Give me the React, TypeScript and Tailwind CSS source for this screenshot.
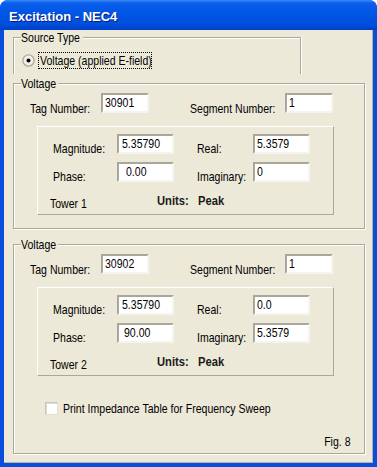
const txt = "font-['Liberation_Sans',Arial,sans-serif] text-[13px] leading-[15px] text-black"

// the dialog font is a tall, narrow sans: squeeze Liberation Sans horizontally
function T({ children, className = "", right = false }: { children: React.ReactNode; className?: string; right?: boolean }) {
  return (
    <span className={`${txt} block whitespace-nowrap scale-x-[0.81] ${right ? "origin-right" : "origin-left"} ${className}`}>
      {children}
    </span>
  )
}

const etched = "border border-[#aca899] shadow-[inset_1px_1px_0_#fff,1px_1px_0_#fff]"
const boldCls = "block whitespace-nowrap origin-left scale-x-[0.86] font-['Liberation_Sans',Arial,sans-serif] text-[13px] font-bold leading-[15px] text-[#1a1a1a]"

function Field({ value, w, pad = "pl-[2px]" }: { value: string; w: string; pad?: string }) {
  return (
    <div className={`${w} ${pad} h-[20px] shrink-0 overflow-hidden border-2 border-t-[#a9a69a] border-l-[#a9a69a] border-b-[#f5f4ee] border-r-[#f5f4ee] bg-white`}>
      <T>{value}</T>
    </div>
  )
}

function GroupLabel({ children, w }: { children: string; w: string }) {
  return (
    <span className={`absolute -top-[8px] left-[7px] ${w} h-[15px] bg-[#ece9d8]`}>
      <T>{children}</T>
    </span>
  )
}

interface VoltageProps {
  tag: string
  mag: string
  real: string
  phase: string
  imag: string
  phasePad: string
  tower: string
  height: string
  children?: React.ReactNode
}

function VoltageGroup({ tag, mag, real, phase, imag, phasePad, tower, height, children }: VoltageProps) {
  return (
    <div className={`relative w-[352px] ${height} ${etched}`}>
      <GroupLabel w="w-[37px]">Voltage</GroupLabel>
      <div className="flex items-start pt-[9px]">
        <T className="ml-[16px] mt-[8px] w-[71px]">Tag Number:</T>
        <Field value={tag} w="w-[48px]" />
        <T className="ml-[41px] mt-[8px] w-[95px]">Segment Number:</T>
        <Field value="1" w="w-[48px]" />
      </div>
      <div className="ml-[23px] mt-[10px] h-[89px] w-[297px] border border-t-white border-l-white border-b-[#aca899] border-r-[#aca899]">
        <div className="flex items-start pt-[7px]">
          <T className="ml-[15px] mt-[7px] w-[64px]">Magnitude:</T>
          <Field value={mag} w="w-[57px]" pad="pl-[3px]" />
          <T className="ml-[23px] mt-[7px] w-[56px]">Real:</T>
          <Field value={real} w="w-[57px]" />
        </div>
        <div className="mt-[6px] flex items-start">
          <T className="ml-[15px] mt-[7px] w-[64px]">Phase:</T>
          <Field value={phase} w="w-[57px]" pad={phasePad} />
          <T className="ml-[23px] mt-[7px] w-[56px]">Imaginary:</T>
          <Field value={imag} w="w-[57px]" />
        </div>
        <div className="mt-[9px] flex items-start">
          <T className="ml-[12px] mt-[3px] w-[107px]">{tower}</T>
          <span className={`${boldCls} w-[41px]`}>Units:</span>
          <span className={boldCls}>Peak</span>
        </div>
      </div>
      {children}
    </div>
  )
}

function Radio() {
  return (
    <svg width="13" height="13" viewBox="0 0 13 13" className="shrink-0">
      <circle cx="6.5" cy="6.5" r="5.6" fill="#f1f0ea" stroke="#aeab9e" strokeWidth="1.4" />
      <circle cx="6.5" cy="6.5" r="2" fill="#000" />
    </svg>
  )
}

export default function App() {
  return (
    <div className="flex h-[467px] w-[377px] flex-col overflow-hidden rounded-t-[8px] bg-[#0a4fdc]">
      <div className="h-[30px] shrink-0 bg-[linear-gradient(to_bottom,#3a8cf6_0%,#0a5eea_10%,#0055e5_45%,#004fdd_80%,#003fc6_100%)] pl-[9px] pt-[9px]">
        <span className="block font-['Liberation_Sans',Arial,sans-serif] text-[13px] font-bold leading-[15px] text-white [text-shadow:1px_1px_0_#0a1c7a]">
          Excitation - NEC4
        </span>
      </div>
      <div className="ml-[4px] flex h-[433px] w-[369px] shrink-0 flex-col border-r border-b border-[#b6b3a6] bg-[#ece9d8] pl-[9px] pt-[7px]">
        <div className="relative h-[37px] w-[288px] shrink-0 border border-b-0 border-[#aca899] shadow-[inset_1px_1px_0_#fff,1px_0_0_#fff]">
          <GroupLabel w="w-[62px]">Source Type</GroupLabel>
          <div className="flex items-center pl-[8px] pt-[14px]">
            <Radio />
            <span className="ml-[3px] h-[17px] w-[114px] border border-dotted border-black pl-[1px]">
              <T>Voltage (applied E-field)</T>
            </span>
          </div>
        </div>

        <div className="mt-[9px] shrink-0">
          <VoltageGroup tag="30901" mag="5.35790" real="5.3579" phase="0.00" imag="0" phasePad="pl-[7px]" tower="Tower 1" height="h-[146px]" />
        </div>

        <div className="mt-[15px] shrink-0">
          <VoltageGroup tag="30902" mag="5.35790" real="0.0" phase="90.00" imag="5.3579" phasePad="pl-[5px]" tower="Tower 2" height="h-[210px]">
            <div className="ml-[31px] mt-[25px] flex items-center">
              <span className="h-[13px] w-[13px] shrink-0 border border-t-[#c9c6b8] border-l-[#c9c6b8] border-b-[#e2e0d6] border-r-[#e2e0d6] bg-white shadow-[inset_1px_1px_0_#dedbd0]" />
              <T className="ml-[5px]">Print Impedance Table for Frequency Sweep</T>
            </div>
            <div className="mt-[18px] flex justify-end pr-[13px]">
              <T right>Fig. 8</T>
            </div>
          </VoltageGroup>
        </div>
      </div>
    </div>
  )
}
